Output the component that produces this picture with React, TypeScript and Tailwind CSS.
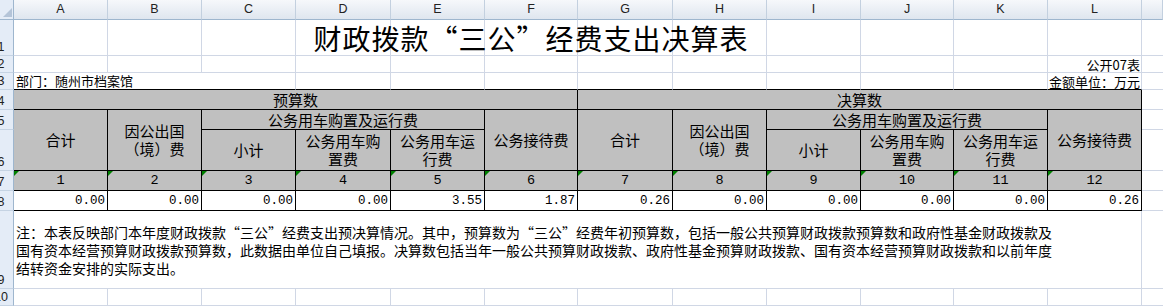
import React from "react";

const LETTERS = ["A", "B", "C", "D", "E", "F", "G", "H", "I", "J", "K", "L", ""];

const COL_START = [
  "col-start-1", "col-start-2", "col-start-3", "col-start-4", "col-start-5", "col-start-6", "col-start-7",
  "col-start-8", "col-start-9", "col-start-10", "col-start-11", "col-start-12", "col-start-13", "col-start-14",
];
const ROW_START = [
  "row-start-1", "row-start-2", "row-start-3", "row-start-4", "row-start-5", "row-start-6",
  "row-start-7", "row-start-8", "row-start-9", "row-start-10", "row-start-11",
];

const CJK = "font-['Noto_Sans_CJK_SC',sans-serif]";
const MONO = "font-['Liberation_Mono','Noto_Sans_CJK_SC',monospace]";

const VALUES = ["0.00", "0.00", "0.00", "0.00", "3.55", "1.87", "0.26", "0.00", "0.00", "0.00", "0.00", "0.26"];

function HeadCell({ cls, children }: { cls: string; children?: React.ReactNode }) {
  return (
    <div
      className={`${cls} bg-[#c0c0c0] border-r border-b border-black flex items-center text-center text-[15px] leading-[18px] text-black ${CJK}`}>
      {children}
    </div>
  );
}

export default function App() {
  return (
    <div className="w-[1163px] h-[306px] overflow-hidden bg-white">
      <div className="grid h-[306px] grid-cols-[14px_94px_94px_94px_95px_94px_93px_95px_94px_94px_93px_94px_94px_1fr] grid-rows-[20px_36px_17px_17px_20px_20px_41px_20px_20px_78px_1fr]">
        {/* corner */}
        <div className="col-start-1 row-start-1 bg-[#e4ecf7] border-r border-b border-[#9eb6ce] flex items-end justify-end pr-[1px] pb-[2px]">
          <svg width="9" height="9" viewBox="0 0 9 9">
            <polygon points="9,0 9,9 0,9" fill="#b4c4d8" />
          </svg>
        </div>

        {/* column headers */}
        {LETTERS.map((l, i) => (
          <div
            key={"h" + i}
            className={`${COL_START[i + 1]} row-start-1 bg-linear-to-b from-[#f6f8fb] to-[#dfe6ef] border-r border-r-[#c3d0df] border-b border-b-[#9eb6ce] flex items-center justify-center text-[12.5px] text-[#222] font-['Liberation_Sans',sans-serif]`}>
            {l}
          </div>
        ))}

        {/* row headers */}
        {[1, 2, 3, 4, 5, 6, 7, 8, 9, 10].map((n) => (
          <div
            key={"r" + n}
            className={`col-start-1 ${ROW_START[n]} bg-[#e4ecf7] border-r border-r-[#9eb6ce] border-b border-b-[#c5d3e3] overflow-hidden flex items-end`}>
            <span className="shrink-0 w-[28px] -ml-[13px] text-center text-[12.5px] leading-[15px] text-[#222] font-['Liberation_Sans',sans-serif]">
              {n}
            </span>
          </div>
        ))}

        {/* gridlines for sheet rows 1-10 */}
        {[1, 2, 3, 4, 5, 6, 7, 8, 9, 10].map((r) =>
          LETTERS.map((_, c) => (
            <div
              key={`g${r}-${c}`}
              className={`${COL_START[c + 1]} ${ROW_START[r]} border-b ${
                r === 3 && c < 12 ? "border-b-black" : "border-b-[#d0d7e5]"
              } ${c < 12 ? "border-r border-r-[#d0d7e5]" : ""}`}
            />
          ))
        )}

        {/* title */}
        <div
          className={`col-start-2 col-end-13 row-start-2 flex items-end justify-center pb-[1px] text-[28px] leading-[34px] tracking-[1px] text-black ${CJK}`}>
          财政拨款“三公”经费支出决算表
        </div>

        {/* row 2 */}
        <div className={`col-start-13 row-start-3 flex items-end justify-end pr-[2px] text-[13px] leading-[16px] text-black ${CJK}`}>
          公开07表
        </div>

        {/* row 3 */}
        <div
          className={`col-start-2 col-end-4 row-start-4 bg-white border-b border-black flex items-end pl-[2px] text-[13px] leading-[16px] text-black ${CJK}`}>
          部门：随州市档案馆
        </div>
        <div
          className={`col-start-13 row-start-4 flex items-end justify-end pr-[2px] text-[13px] leading-[16px] text-black ${CJK}`}>
          金额单位：万元
        </div>

        {/* row 4 */}
        <HeadCell cls="col-start-2 col-end-8 row-start-5 justify-start">
          <span className="ml-[259px]">预算数</span>
        </HeadCell>
        <HeadCell cls="col-start-8 col-end-14 row-start-5 justify-center">决算数</HeadCell>

        {/* rows 5-6 */}
        <HeadCell cls="col-start-2 row-start-6 row-end-8 justify-center">合计</HeadCell>
        <HeadCell cls="col-start-3 row-start-6 row-end-8 justify-center">
          因公出国
          <br />
          （境）费
        </HeadCell>
        <HeadCell cls="col-start-4 col-end-7 row-start-6 justify-center">公务用车购置及运行费</HeadCell>
        <HeadCell cls="col-start-7 row-start-6 row-end-8 justify-center">公务接待费</HeadCell>
        <HeadCell cls="col-start-8 row-start-6 row-end-8 justify-center">合计</HeadCell>
        <HeadCell cls="col-start-9 row-start-6 row-end-8 justify-center">
          因公出国
          <br />
          （境）费
        </HeadCell>
        <HeadCell cls="col-start-10 col-end-13 row-start-6 justify-center">公务用车购置及运行费</HeadCell>
        <HeadCell cls="col-start-13 row-start-6 row-end-8 justify-center">公务接待费</HeadCell>

        <HeadCell cls="col-start-4 row-start-7 justify-center">小计</HeadCell>
        <HeadCell cls="col-start-5 row-start-7 justify-center">
          公务用车购
          <br />
          置费
        </HeadCell>
        <HeadCell cls="col-start-6 row-start-7 justify-center">
          公务用车运
          <br />
          行费
        </HeadCell>
        <HeadCell cls="col-start-10 row-start-7 justify-center">小计</HeadCell>
        <HeadCell cls="col-start-11 row-start-7 justify-center">
          公务用车购
          <br />
          置费
        </HeadCell>
        <HeadCell cls="col-start-12 row-start-7 justify-center">
          公务用车运
          <br />
          行费
        </HeadCell>

        {/* row 7: column numbers */}
        {VALUES.map((_, i) => (
          <div
            key={"n" + i}
            className={`${COL_START[i + 1]} row-start-8 relative bg-[#c0c0c0] border-r border-b border-black flex items-end justify-center pb-[1px] text-[13.5px] leading-[16px] text-black ${MONO}`}>
            <span className="absolute left-0 top-0 w-0 h-0 border-t-[5px] border-t-[#008000] border-r-[5px] border-r-transparent" />
            {i + 1}
          </div>
        ))}

        {/* row 8: values */}
        {VALUES.map((v, i) => (
          <div
            key={"v" + i}
            className={`${COL_START[i + 1]} row-start-9 bg-white border-r border-b border-black flex items-end justify-end pr-[2px] pb-[1px] text-[12.5px] leading-[16px] text-black ${MONO}`}>
            {v}
          </div>
        ))}

        {/* row 9: note */}
        <div
          className={`col-start-2 col-end-14 row-start-10 bg-white border-r border-r-[#d0d7e5] border-b border-b-[#d0d7e5] flex flex-col justify-center pl-[2px] text-[14px] leading-[18px] text-black whitespace-nowrap ${CJK}`}>
          <span>注：本表反映部门本年度财政拨款“三公”经费支出预决算情况。其中，预算数为“三公”经费年初预算数，包括一般公共预算财政拨款预算数和政府性基金财政拨款及</span>
          <span>国有资本经营预算财政拨款预算数，此数据由单位自己填报。决算数包括当年一般公共预算财政拨款、政府性基金预算财政拨款、国有资本经营预算财政拨款和以前年度</span>
          <span>结转资金安排的实际支出。</span>
        </div>
      </div>
    </div>
  );
}
